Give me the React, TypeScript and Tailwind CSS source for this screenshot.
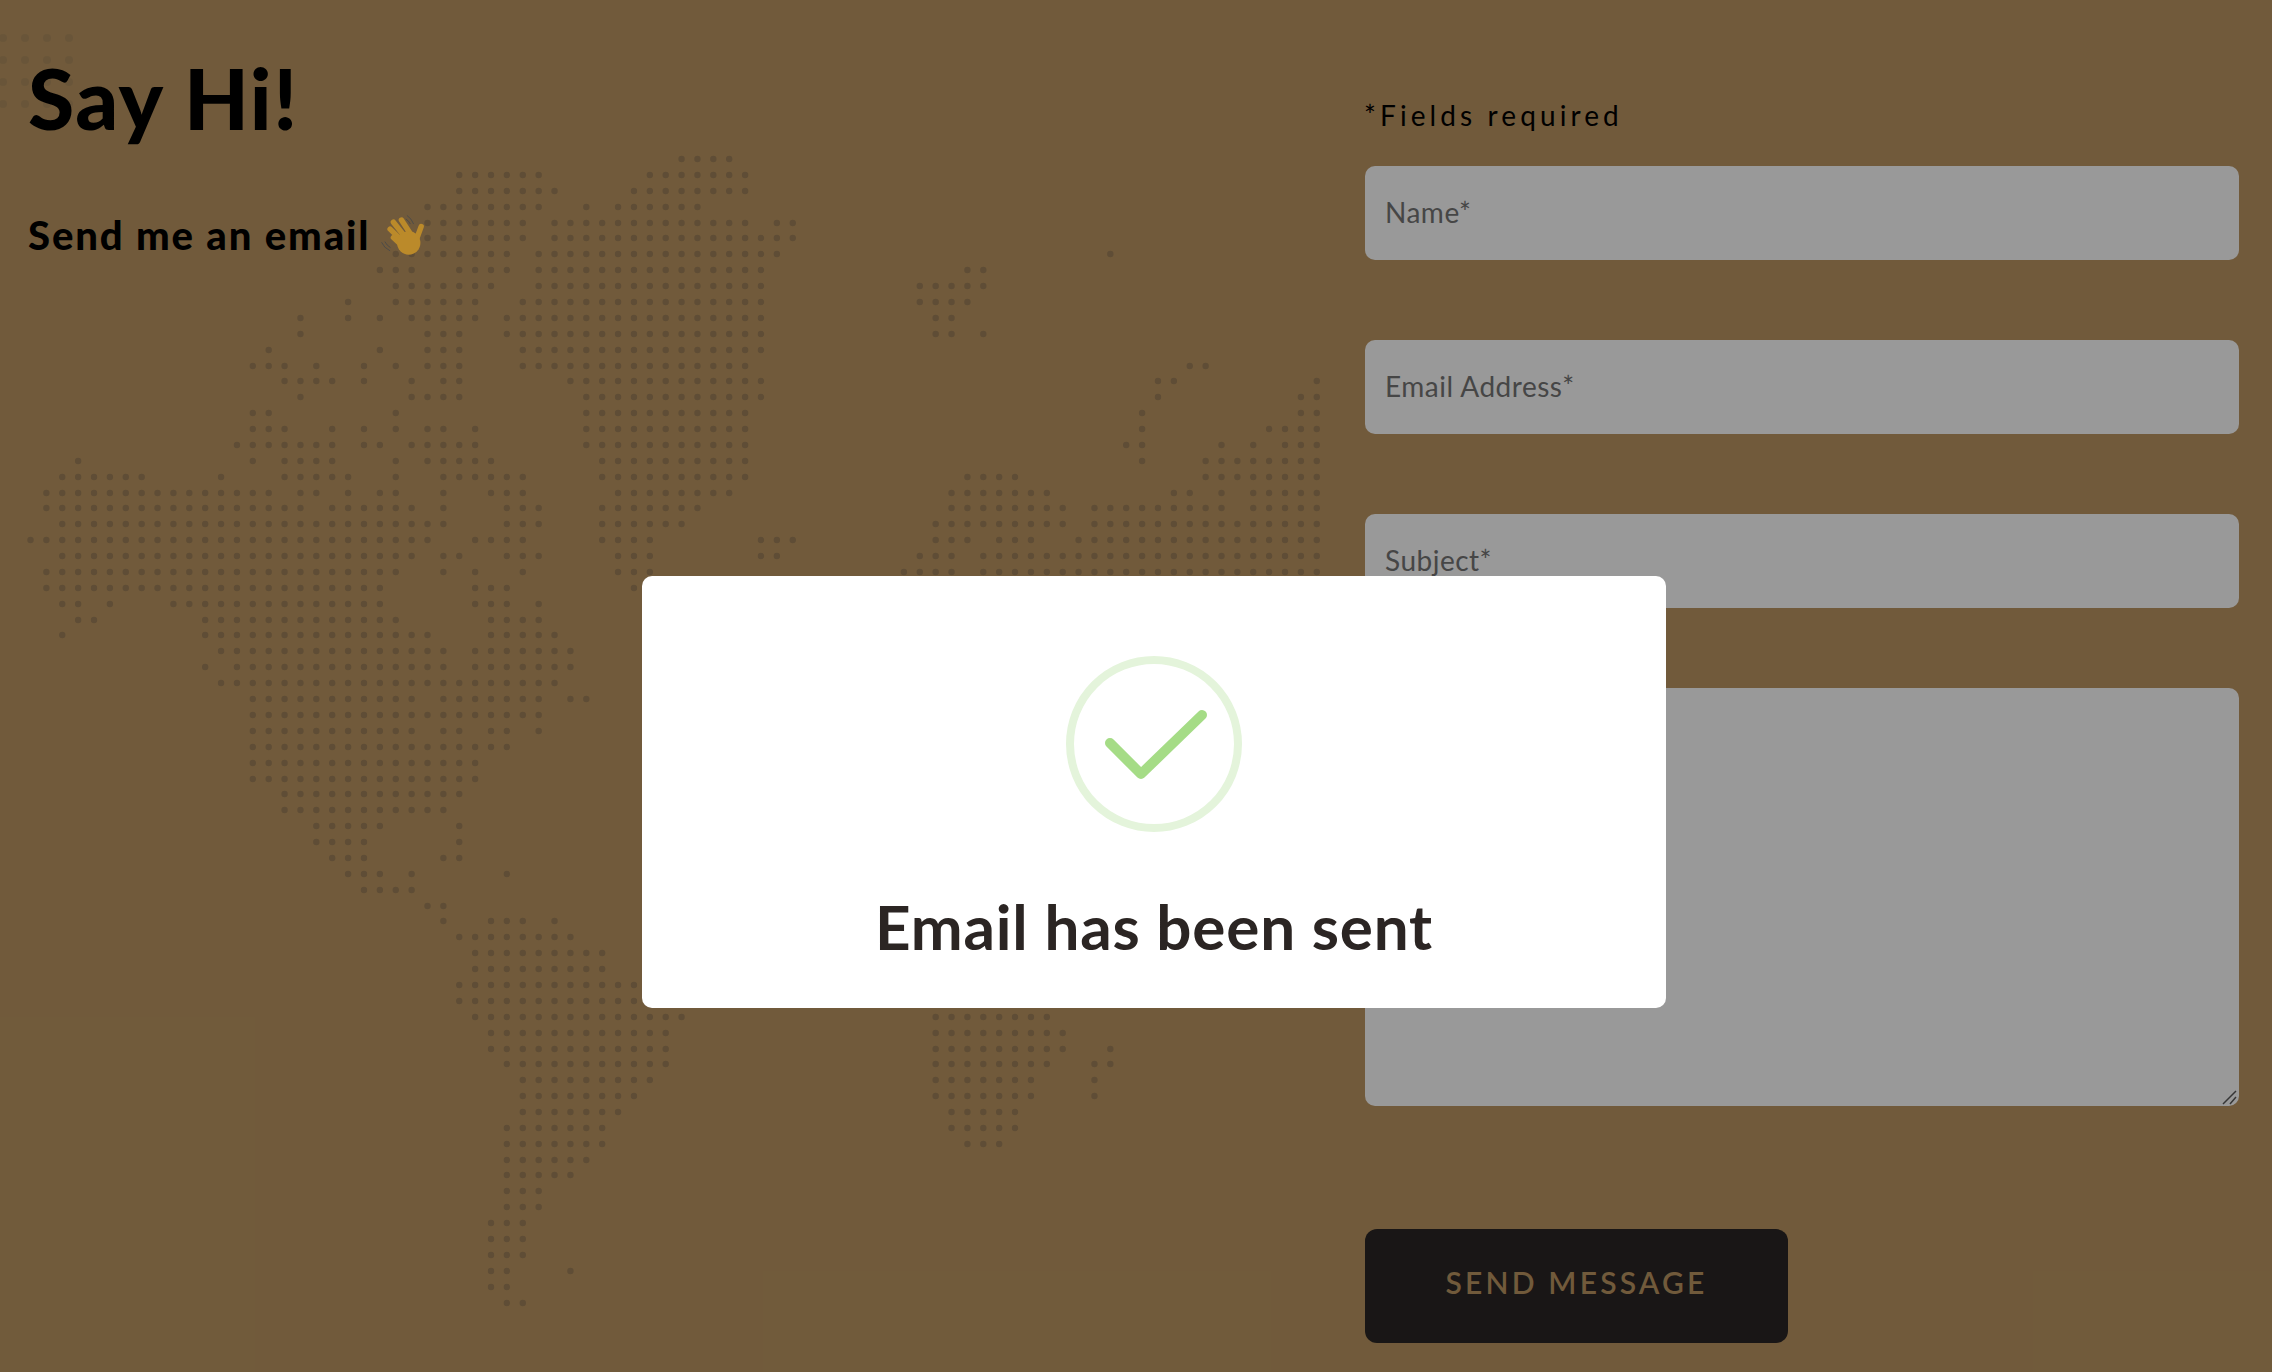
import React from "react";

// dot map rows: [y, "column ranges"], column k sits at x = 30.5 + 15.88 * k
const mapRows: [number, string][] = [
  [159, "41-44"],
  [175, "27-32 39-45"],
  [191, "27-33 38-45"],
  [207, "25-32 35 37-42"],
  [223, "25-31 33-45 47-48"],
  [238, "25-31 33-48"],
  [254, "23-30 32-47 68"],
  [270, "22-24 27-30 32-46 59-60"],
  [286, "23-29 32-46 56-60"],
  [302, "20 23-28 31-46 56-59"],
  [318, "17 20 22 24-28 30-46 57-58"],
  [334, "17 25-27 30-46 57-58 60"],
  [350, "15 22 25-27 31-46"],
  [366, "14-16 18 21 23 25-27 31-45 73-74"],
  [381, "16-19 21 24 26-27 34-46 71-72 81"],
  [397, "17 24-27 35-46 71 80-81"],
  [413, "14-15 23 35-45 70 80-81"],
  [429, "14-16 19 21 23 25-26 28 35-45 70 78-81"],
  [445, "13-19 21-22 24-28 35-45 69-70 75 77 79-81"],
  [461, "3 14 16-19 23 25-29 36-45 70 74-81"],
  [477, "2-7 12 16-20 23 26-31 36-45 59-62 74-81"],
  [493, "1-15 17-18 20 22-23 26 29-31 37-44 58-64 72-73 75 77-81"],
  [508, "1-17 19-24 26 30-32 36-42 58-65 67-75 77-81"],
  [524, "2-26 30-32 36-41 57-65 67-81"],
  [540, "0-25 28-31 36-39 46-48 57-59 61-63 66-81"],
  [556, "2-24 26-27 30-32 37-39 46-47 56-58 60-81"],
  [572, "1-23 26 28 31 37-39 55-58 60-81"],
  [588, "1-22 28-30 38"],
  [604, "2-3 5 9-22 28-30 32"],
  [620, "3-4 11-23 29-32"],
  [635, "2 11-25 29-33"],
  [651, "12-26 28-34"],
  [667, "11 13-26 28-34"],
  [683, "12-33"],
  [699, "14-24 26-32 34-35"],
  [715, "14-32"],
  [731, "14-24 26-27 29-30 32"],
  [747, "14-30"],
  [763, "14-28"],
  [779, "14-28"],
  [794, "16-27"],
  [810, "16-26"],
  [826, "18-22 27"],
  [842, "18-21 27"],
  [858, "19-21 26-27"],
  [874, "20-22 24 30"],
  [890, "21-24"],
  [906, "25-26"],
  [921, "26 29-31 33"],
  [937, "27-34"],
  [953, "28-36"],
  [969, "28-36"],
  [985, "27-38"],
  [1001, "27-38"],
  [1017, "28-41 57-64"],
  [1033, "29-40 57-65"],
  [1049, "29-40 57-65 68"],
  [1064, "30-40 57-64 67-68"],
  [1080, "31-39 57-63 67"],
  [1096, "31-38 57-63 67"],
  [1112, "31-37 58-62"],
  [1128, "30-36 58-62"],
  [1144, "30-36 59-61"],
  [1160, "30-35"],
  [1175, "30-34"],
  [1191, "30-32"],
  [1207, "30-32"],
  [1223, "29-31"],
  [1239, "29-31"],
  [1255, "29-31"],
  [1271, "29-30 34"],
  [1287, "29-30"],
  [1303, "30-31"],
];

function columns(ranges: string) {
  const out: number[] = [];
  ranges.split(" ").forEach((r) => {
    const [a, b] = r.split("-").map(Number);
    for (let k = a; k <= (b ?? a); k++) out.push(k);
  });
  return out;
}

function DotMap() {
  return (
    <svg className="absolute inset-0 pointer-events-none" width="2272" height="1372">
      {[3, 25, 47, 69].flatMap((x) =>
        [38, 60, 82, 104].map((y) => <circle key={`c${x}-${y}`} cx={x} cy={y} r="4" fill="#b08e60" />)
      )}
      {mapRows.flatMap(([y, ranges]) =>
        columns(ranges).map((k) => <circle key={`${y}-${k}`} cx={30.5 + 15.88 * k} cy={y} r="3.2" fill="#9e805a" />)
      )}
    </svg>
  );
}

function WaveHand() {
  return (
    <svg width="46" height="46" viewBox="66 40 126 126" className="shrink-0 relative z-10">
      <g stroke="#bb8a2a" strokeWidth="15" strokeLinecap="round" fill="none">
        <path d="M122 62 L150 105" />
        <path d="M100 68 L135 112" />
        <path d="M91 87 L125 120" />
        <path d="M100 110 L122 130" />
        <path d="M176 80 L162 118" />
      </g>
      <circle cx="142" cy="125" r="32" fill="#bb8a2a" />
      <g stroke="#4a4a4a" strokeWidth="2.5" fill="none" strokeLinecap="round">
        <path d="M138 50 Q150 58 155 72" />
        <path d="M135 60 Q142 64 146 72" />
        <path d="M68 124 Q74 138 90 146" />
        <path d="M77 122 Q82 132 91 137" />
      </g>
    </svg>
  );
}

function SuccessModal() {
  return (
    <div className="absolute z-20 left-[642px] top-[576px] w-[1024px] h-[432px] bg-white rounded-[10px] flex flex-col items-center pt-[80px]">
      <svg width="176" height="176" viewBox="0 0 176 176">
        <circle cx="88" cy="88" r="84" fill="none" stroke="#e4f4db" strokeWidth="8" />
        <path d="M44 87 L75 118 L136 59" fill="none" stroke="#a5dc86" strokeWidth="10" strokeLinecap="round" strokeLinejoin="round" />
      </svg>
      <h2 className="mt-[58px] text-[62px] leading-[72px] font-bold tracking-[0.8px] text-[#2b2523]">Email has been sent</h2>
    </div>
  );
}

export default function App() {
  const field =
    "w-full bg-white rounded-[10px] px-[20px] pb-[2px] text-[28px] tracking-[0.5px] outline-none placeholder:text-[#757575]";
  return (
    <div className="relative w-full h-[1372px] overflow-hidden bg-[#bd9763] [font-family:Lato,sans-serif] text-black">
      <DotMap />
      <div className="relative flex justify-between h-full">
        <div className="pl-[28px] pt-[56px]">
          <h1 className="text-[84px] leading-[84px] font-black tracking-[1.5px]">Say Hi!</h1>
          <div className="mt-[71px] flex items-center gap-[11px]">
            <h3 className="text-[40px] leading-[48px] font-black tracking-[1.9px]">Send me an email</h3>
            <WaveHand />
          </div>
        </div>
        <form className="w-[874px] mr-[33px] pt-[99px] flex flex-col">
          <p className="-ml-[1px] text-[28px] leading-[32px] tracking-[4.1px] mb-[35px]">*Fields required</p>
          <div className="flex flex-col gap-[80px]">
            <input className={`${field} h-[94px]`} placeholder="Name*" />
            <input className={`${field} h-[94px]`} placeholder="Email Address*" />
            <input className={`${field} h-[94px]`} placeholder="Subject*" />
            <div className="relative">
              <textarea className={`${field} h-[418px] pt-[21px] block resize-none`} />
              <svg className="absolute right-[1px] bottom-[1px]" width="16" height="16" viewBox="0 0 16 16">
                <path d="M1 15 L14 2 M8 15 L14 8" stroke="#5a5a5a" strokeWidth="1.5" fill="none" />
              </svg>
            </div>
          </div>
          <button type="button" className="mt-[123px] w-[423px] h-[114px] pb-[8px] rounded-[12px] bg-[#2b2625] text-[#bd9763] text-[30px] font-semibold tracking-[3.2px]">
            SEND MESSAGE
          </button>
        </form>
      </div>
      <div className="absolute inset-0 bg-black/40" />
      <SuccessModal />
    </div>
  );
}
